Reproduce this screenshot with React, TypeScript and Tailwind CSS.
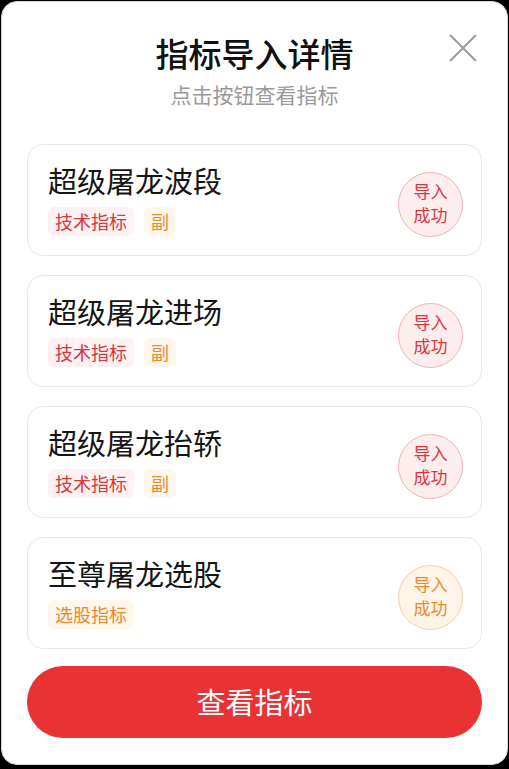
import React from 'react';

type Tone = 'red' | 'orange';

interface Indicator {
  name: string;
  tags: { label: string; tone: Tone }[];
  tone: Tone;
}

const indicators: Indicator[] = [
  { name: '超级屠龙波段', tags: [{ label: '技术指标', tone: 'red' }, { label: '副', tone: 'orange' }], tone: 'red' },
  { name: '超级屠龙进场', tags: [{ label: '技术指标', tone: 'red' }, { label: '副', tone: 'orange' }], tone: 'red' },
  { name: '超级屠龙抬轿', tags: [{ label: '技术指标', tone: 'red' }, { label: '副', tone: 'orange' }], tone: 'red' },
  { name: '至尊屠龙选股', tags: [{ label: '选股指标', tone: 'orange' }], tone: 'orange' },
];

const tagClass: Record<Tone, string> = {
  red: 'bg-[#fdf1f1] text-[#d9363e]',
  orange: 'bg-[#fff6ec] text-[#ea8a2e]',
};

const badgeClass: Record<Tone, string> = {
  red: 'bg-[#fdeded] border-[#efb5b5] text-[#d9363e]',
  orange: 'bg-[#fff4e8] border-[#f5cfa6] text-[#ea8a2e]',
};

const IndicatorCard: React.FC<{ item: Indicator }> = ({ item }) => (
  <div className="h-[112px] rounded-2xl border border-[#e9e9e9] bg-white flex items-center justify-between pl-5 pr-[18px]">
    <div className="flex flex-col pb-[3px]">
      <div className="text-[29px] leading-[36px] text-[#151515]">{item.name}</div>
      <div className="flex gap-[10px] mt-[9px]">
        {item.tags.map((t) => (
          <span
            key={t.label}
            className={`h-[29px] px-[7px] rounded-md text-[18px] leading-[29px] ${tagClass[t.tone]}`}
          >
            {t.label}
          </span>
        ))}
      </div>
    </div>
    {/* import status */}
    <div
      className={`mt-[9px] w-[65px] h-[65px] rounded-full border flex flex-col items-center justify-center text-[17px] leading-[24px] pb-[3px] ${badgeClass[item.tone]}`}
    >
      <span>导入</span>
      <span>成功</span>
    </div>
  </div>
);

export default function App() {
  return (
    <div
      className="w-[509px] h-[769px] bg-black pt-[1px] px-[1px]"
      style={{ fontFamily: '"Noto Sans CJK SC", "Noto Sans", sans-serif' }}
    >
      <div className="relative h-[764px] bg-white rounded-2xl border border-[#d6d6d6] flex flex-col px-[25px] pb-[26px]">
        {/* close */}
        <button className="absolute top-[31px] right-[29px] w-[30px] h-[30px] flex items-center justify-center">
          <svg width="30" height="30" viewBox="0 0 30 30" fill="none" stroke="#9b9b9b" strokeWidth="2">
            <path d="M2 2 L28 28 M28 2 L2 28" />
          </svg>
        </button>

        <div className="flex flex-col items-center pt-[29px]">
          <h1 className="text-[33px] leading-[44px] font-medium text-[#111]">指标导入详情</h1>
          <p className="mt-[5px] text-[21px] leading-[28px] text-[#9a9a9a]">点击按钮查看指标</p>
        </div>

        <div className="flex flex-col gap-[19px] mt-[36px]">
          {indicators.map((it) => (
            <IndicatorCard key={it.name} item={it} />
          ))}
        </div>

        <button className="mt-auto h-[72px] rounded-full bg-[#e83234] text-white text-[29px]">
          查看指标
        </button>
      </div>
    </div>
  );
}
